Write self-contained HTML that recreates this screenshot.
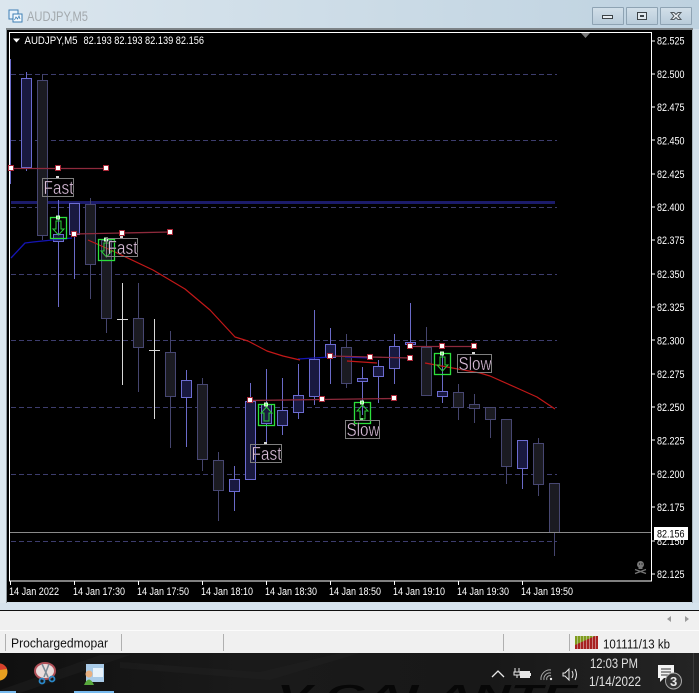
<!DOCTYPE html>
<html><head><meta charset="utf-8"><style>
html,body{margin:0;padding:0;background:#f0f0f0}
#r{position:relative;width:699px;height:693px;overflow:hidden;font-family:"Liberation Sans",sans-serif}
svg{filter:blur(.3px)}
</style></head><body><div id="r">
<svg width="699" height="693" viewBox="0 0 699 693" style="position:absolute;left:0;top:0" shape-rendering="crispEdges" font-family="Liberation Sans, sans-serif">
<defs>
<linearGradient id="tb2" x1="0" y1="0" x2="1" y2="0"><stop offset="0" stop-color="#dbe6ee"/><stop offset="1" stop-color="#bed2e0"/></linearGradient>
<linearGradient id="btn" x1="0" y1="0" x2="0" y2="1"><stop offset="0" stop-color="#d2dfe9"/><stop offset="1" stop-color="#b8cbd9"/></linearGradient>
<linearGradient id="task" x1="0" y1="0" x2="1" y2="0"><stop offset="0" stop-color="#101010"/><stop offset=".35" stop-color="#1a1a1a"/><stop offset=".7" stop-color="#181818"/><stop offset="1" stop-color="#242424"/></linearGradient>
</defs>
<!-- window frame -->
<rect width="699" height="29" fill="url(#tb2)"/>
<rect y="29" width="699" height="581" fill="#d3e0ea"/>
<rect x="0" y="29" width="6" height="581" fill="#dce7ef"/>
<rect x="6" y="28" width="687" height="2" fill="#7d8387"/>
<rect x="6" y="30" width="1" height="573" fill="#8c959b"/>
<rect x="692" y="30" width="1" height="573" fill="#aab6bf"/>
<!-- title -->
<g shape-rendering="auto">
<rect x="9" y="10" width="9" height="9" fill="#e8f2fa" stroke="#3d7fb5"/>
<rect x="13" y="14" width="9" height="8" fill="#f4f9fd" stroke="#3d7fb5"/>
<path d="M14.500 20l1.500-3 1.500 2 1.500-3 1 3" fill="none" stroke="#3d7fb5" stroke-width=".8"/>
<text x="27" y="21" font-size="13.500" fill="#a3a9ad" textLength="61" lengthAdjust="spacingAndGlyphs">AUDJPY,M5</text>
</g>
<!-- buttons -->
<g fill="url(#btn)" stroke="#8ea3b3"><rect x="592.500" y="7.500" width="31" height="17" rx="1"/><rect x="626.500" y="7.500" width="31" height="17" rx="1"/><rect x="660.500" y="7.500" width="31" height="17" rx="1"/></g>
<rect x="602.500" y="15.500" width="10" height="3" fill="#e8edf1" stroke="#3c4347"/>
<rect x="637.500" y="12.500" width="9" height="7" fill="#dfe7ed" stroke="#3c4347"/><rect x="640" y="15" width="4" height="2" fill="#3c4347"/>
<path shape-rendering="auto" d="M671 12.500l3 0 2 2 2-2 3 0-3 3.500 3 3.500-3 0-2-2-2 2-3 0 3-3.500z" fill="#eef2f5" stroke="#50585e"/>
<!-- chart -->
<rect x="7" y="30" width="685" height="572" fill="#000"/>
<rect x="9.500" y="32.500" width="642" height="548.500" fill="#000" stroke="#fff"/>
<path d="M652 41h3M652 74h3M652 107h3M652 140h3M652 174h3M652 207h3M652 240h3M652 274h3M652 307h3M652 340h3M652 374h3M652 407h3M652 440h3M652 474h3M652 507h3M652 541h3M652 574h3" stroke="#fff"/>
<path d="M10.500 581v4M74.500 581v4M138.500 581v4M202.500 581v4M266.500 581v4M330.500 581v4M394.500 581v4M458.500 581v4M522.500 581v4" stroke="#fff"/>
<!-- grid -->
<path d="M11 74.500H557M11 140.500H557M11 207.500H557M11 274.500H557M11 340.500H557M11 407.500H557M11 474.500H557M11 541.500H557" stroke="#3d3d6e" stroke-dasharray="5 3"/>
<!-- blue level -->
<rect x="11" y="201" width="544" height="3" fill="#1b1b6b"/>
<!-- wicks dark -->
<path d="M42.500 74V240M90.500 198V299M106.500 240V333M138.500 283V392M170.500 331V448M202.500 378V471M218.500 452V521M346.500 334V388M426.500 327V395M458.500 384V420M474.500 394V423M490.500 407V438M506.500 419V484M538.500 438V496M554.500 483V556" stroke="#45456e"/>
<!-- wicks bright -->
<path d="M10.500 59V184M26.500 72V171M58.500 200V307M74.500 203V279M186.500 370V447M234.500 466V511M250.500 383V479M266.500 369V445M282.500 378V435M298.500 364V419M314.500 310V405M330.500 328V384M362.500 367V415M378.500 360V403M394.500 334V384M410.500 303V348M442.500 353V403M522.500 440V489" stroke="#6a6ac8"/>
<!-- doji -->
<path d="M122.500 283V385M154.500 319V419M117 319.500H128M149 350.500H160" stroke="#d8d8d8"/>
<!-- bodies dark -->
<g fill="#1b1b22" stroke="#474772">
<rect x="37.500" y="80.500" width="10" height="155"/>
<rect x="85.500" y="204.500" width="10" height="60"/>
<rect x="101.500" y="240.500" width="10" height="78"/>
<rect x="133.500" y="318.500" width="10" height="29"/>
<rect x="165.500" y="352.500" width="10" height="44"/>
<rect x="197.500" y="384.500" width="10" height="75"/>
<rect x="213.500" y="460.500" width="10" height="30"/>
<rect x="341.500" y="347.500" width="10" height="36"/>
<rect x="421.500" y="347.500" width="10" height="48"/>
<rect x="453.500" y="392.500" width="10" height="15"/>
<rect x="469.500" y="404.500" width="10" height="4"/>
<rect x="485.500" y="407.500" width="10" height="12"/>
<rect x="501.500" y="419.500" width="10" height="47"/>
<rect x="533.500" y="443.500" width="10" height="41"/>
<rect x="549.500" y="483.500" width="10" height="49"/>
</g>
<!-- bodies bright -->
<g fill="#191940" stroke="#6c6cd2">
<rect x="21.500" y="78.500" width="10" height="89"/>
<rect x="53.500" y="234.500" width="10" height="7"/>
<rect x="69.500" y="203.500" width="10" height="31"/>
<rect x="181.500" y="380.500" width="10" height="17"/>
<rect x="229.500" y="479.500" width="10" height="12"/>
<rect x="245.500" y="401.500" width="10" height="78"/>
<rect x="261.500" y="404.500" width="10" height="19"/>
<rect x="277.500" y="410.500" width="10" height="15"/>
<rect x="293.500" y="395.500" width="10" height="17"/>
<rect x="309.500" y="359.500" width="10" height="37"/>
<rect x="325.500" y="344.500" width="10" height="13"/>
<rect x="357.500" y="378.500" width="10" height="3"/>
<rect x="373.500" y="366.500" width="10" height="10"/>
<rect x="389.500" y="346.500" width="10" height="22"/>
<rect x="405.500" y="342.500" width="10" height="2"/>
<rect x="437.500" y="391.500" width="10" height="5"/>
<rect x="517.500" y="440.500" width="10" height="28"/>
</g>
<!-- current price -->
<rect x="10" y="532" width="641" height="1" fill="#8a8a8a"/>
<g shape-rendering="auto" fill="none" stroke-linejoin="round">
<path d="M11 258L25 243 33 242 72 238" stroke="#1414b4" stroke-width="1.300"/>
<path d="M298 359L330 357M345 357L370 358" stroke="#1414b4" stroke-width="1.200"/>
<path d="M88 240L115 252 153 270 185 289 210 310 235 337 248 341 267 351 283 356 300 360M347 361L377 363M425 363L447 367 480 373 490 376 517 388 537 397 555 409" stroke="#c21818" stroke-width="1.200"/>
<path d="M11 168.500H106M74 234L122 233 170 232M250 400.500L322 399.500 394 398.500M330 356L370 357 410 358M410 346.500H474" stroke="#8e2a3c" stroke-width="1.300"/>
</g>
<!-- handles -->
<g fill="#fff" stroke="#a82838">
<rect x="8.500" y="165.500" width="5" height="5"/><rect x="55.500" y="165.500" width="5" height="5"/><rect x="103.500" y="165.500" width="5" height="5"/>
<rect x="71.500" y="231.500" width="5" height="5"/><rect x="119.500" y="230.500" width="5" height="5"/><rect x="167.500" y="229.500" width="5" height="5"/>
<rect x="247.500" y="397.500" width="5" height="5"/><rect x="319.500" y="396.500" width="5" height="5"/><rect x="391.500" y="395.500" width="5" height="5"/>
<rect x="327.500" y="353.500" width="5" height="5"/><rect x="367.500" y="354.500" width="5" height="5"/><rect x="407.500" y="355.500" width="5" height="5"/>
<rect x="407.500" y="343.500" width="5" height="5"/><rect x="439.500" y="343.500" width="5" height="5"/><rect x="471.500" y="343.500" width="5" height="5"/>
</g>
<!-- small label anchors -->
<g fill="#d8d8d8"><rect x="56" y="176" width="3" height="3"/><rect x="120" y="236" width="3" height="3"/><rect x="264" y="442" width="3" height="3"/><rect x="360" y="418" width="3" height="3"/><rect x="472" y="352" width="3" height="3"/></g>
<!-- green boxes -->
<g fill="none" stroke="#2ce03c" stroke-width="1.300" shape-rendering="auto">
<rect x="50.500" y="217.500" width="16" height="21"/>
<rect x="98.500" y="239.500" width="16" height="21"/>
<rect x="258.500" y="404.500" width="16" height="21"/>
<rect x="354.500" y="402.500" width="16" height="21"/>
<rect x="434.500" y="353.500" width="16" height="21"/>
</g>
<g fill="none" stroke="#2ccf3a" shape-rendering="auto" stroke-width="1">
<path d="M56 221V229H53L58.500 235 64 229H61V221Z"/>
<path d="M104 243V251H101L106.500 257 112 251H109V243Z"/>
<path d="M264 421V413H261L266.500 407 272 413H269V421Z"/>
<path d="M360 419V411H357L362.500 405 368 411H365V419Z"/>
<path d="M440 357V365H437L442.500 371 448 365H445V357Z"/>
</g>
<g fill="#6dff6d" stroke="#d8ffd8"><rect x="56.500" y="216" width="3" height="3"/><rect x="104.500" y="238" width="3" height="3"/><rect x="264.500" y="403" width="3" height="3"/><rect x="360.500" y="401" width="3" height="3"/><rect x="440.500" y="352" width="3" height="3"/></g>
<!-- labels -->
<g fill="none" stroke="#7f7f7f"><rect x="42.500" y="178.500" width="31" height="18"/><rect x="106.500" y="238.500" width="31" height="18"/><rect x="250.500" y="444.500" width="31" height="18"/><rect x="345.500" y="420.500" width="34" height="18"/><rect x="457.500" y="354.500" width="34" height="18"/></g>
<g shape-rendering="auto" font-size="18" fill="#dcc0dc" stroke="#000" stroke-width=".35">
<text x="43.500" y="194" textLength="30" lengthAdjust="spacingAndGlyphs">Fast</text>
<text x="107.500" y="254" textLength="30" lengthAdjust="spacingAndGlyphs">Fast</text>
<text x="251.500" y="460" textLength="30" lengthAdjust="spacingAndGlyphs">Fast</text>
<text x="346.500" y="436" textLength="33" lengthAdjust="spacingAndGlyphs">Slow</text>
<text x="458.500" y="370" textLength="33" lengthAdjust="spacingAndGlyphs">Slow</text>
</g>
<!-- header -->
<path shape-rendering="auto" d="M13 38.500H20L16.500 42.500Z" fill="#fff"/>
<path shape-rendering="auto" d="M581 33H590L585.500 38Z" fill="#7a7a7a"/>
<g shape-rendering="auto" fill="#fff" font-size="11">
<text x="24.500" y="44" textLength="53" lengthAdjust="spacingAndGlyphs">AUDJPY,M5</text>
<text x="83.500" y="44" textLength="120.500" lengthAdjust="spacingAndGlyphs">82.193 82.193 82.139 82.156</text>
</g>
<!-- price axis -->
<g shape-rendering="auto" fill="#fff" font-size="11">
<text x="657" y="44.500" textLength="27.500" lengthAdjust="spacingAndGlyphs">82.525</text>
<text x="657" y="78" textLength="27.500" lengthAdjust="spacingAndGlyphs">82.500</text>
<text x="657" y="111" textLength="27.500" lengthAdjust="spacingAndGlyphs">82.475</text>
<text x="657" y="144.500" textLength="27.500" lengthAdjust="spacingAndGlyphs">82.450</text>
<text x="657" y="178" textLength="27.500" lengthAdjust="spacingAndGlyphs">82.425</text>
<text x="657" y="211" textLength="27.500" lengthAdjust="spacingAndGlyphs">82.400</text>
<text x="657" y="244" textLength="27.500" lengthAdjust="spacingAndGlyphs">82.375</text>
<text x="657" y="278" textLength="27.500" lengthAdjust="spacingAndGlyphs">82.350</text>
<text x="657" y="311" textLength="27.500" lengthAdjust="spacingAndGlyphs">82.325</text>
<text x="657" y="344.500" textLength="27.500" lengthAdjust="spacingAndGlyphs">82.300</text>
<text x="657" y="378" textLength="27.500" lengthAdjust="spacingAndGlyphs">82.275</text>
<text x="657" y="411" textLength="27.500" lengthAdjust="spacingAndGlyphs">82.250</text>
<text x="657" y="444.500" textLength="27.500" lengthAdjust="spacingAndGlyphs">82.225</text>
<text x="657" y="478" textLength="27.500" lengthAdjust="spacingAndGlyphs">82.200</text>
<text x="657" y="511" textLength="27.500" lengthAdjust="spacingAndGlyphs">82.175</text>
<text x="657" y="545" textLength="27.500" lengthAdjust="spacingAndGlyphs">82.150</text>
<text x="657" y="578" textLength="27.500" lengthAdjust="spacingAndGlyphs">82.125</text>
</g>
<rect x="654" y="527" width="34" height="13" fill="#fff"/>
<text shape-rendering="auto" x="657" y="537.500" font-size="11" fill="#000" textLength="27.500" lengthAdjust="spacingAndGlyphs">82.156</text>
<!-- time axis -->
<g shape-rendering="auto" fill="#fff" font-size="11">
<text x="9" y="595" textLength="50" lengthAdjust="spacingAndGlyphs">14 Jan 2022</text>
<text x="73" y="595" textLength="52" lengthAdjust="spacingAndGlyphs">14 Jan 17:30</text>
<text x="137" y="595" textLength="52" lengthAdjust="spacingAndGlyphs">14 Jan 17:50</text>
<text x="201" y="595" textLength="52" lengthAdjust="spacingAndGlyphs">14 Jan 18:10</text>
<text x="265" y="595" textLength="52" lengthAdjust="spacingAndGlyphs">14 Jan 18:30</text>
<text x="329" y="595" textLength="52" lengthAdjust="spacingAndGlyphs">14 Jan 18:50</text>
<text x="393" y="595" textLength="52" lengthAdjust="spacingAndGlyphs">14 Jan 19:10</text>
<text x="457" y="595" textLength="52" lengthAdjust="spacingAndGlyphs">14 Jan 19:30</text>
<text x="521" y="595" textLength="52" lengthAdjust="spacingAndGlyphs">14 Jan 19:50</text>
</g>
<!-- skull -->
<g shape-rendering="auto" fill="#767676"><circle cx="640.500" cy="564.500" r="3.500"/><rect x="638.500" y="566" width="4" height="3"/><path d="M635 569.500L646 573.500M646 569.500L635 573.500" stroke="#767676" stroke-width="1.300" fill="none"/><rect x="639" y="563.500" width="1" height="1" fill="#000"/><rect x="641.500" y="563.500" width="1" height="1" fill="#000"/></g>
<!-- bottom bars -->
<rect x="0" y="603" width="699" height="7" fill="#d6e3ed"/>
<rect x="0" y="610" width="699" height="1" fill="#101010"/>
<rect x="0" y="611" width="699" height="20" fill="#f0f0f0"/>
<path shape-rendering="auto" d="M671 616V622L667 619ZM685 616V622L689 619Z" fill="#9a9a9a"/>
<rect x="0" y="630" width="699" height="1" fill="#fbfbfb"/>
<rect x="0" y="631" width="699" height="22" fill="#f0f0f0"/>
<g fill="#b0b0b0"><rect x="5" y="634" width="1" height="17"/><rect x="121" y="634" width="1" height="17"/><rect x="223" y="634" width="1" height="17"/><rect x="503" y="634" width="1" height="17"/><rect x="569" y="634" width="1" height="17"/></g>
<text shape-rendering="auto" x="11" y="647.500" font-size="13" fill="#111" textLength="97" lengthAdjust="spacingAndGlyphs">Prochargedmopar</text>
<!-- traffic bars -->
<rect x="575" y="636" width="23" height="13" fill="#a82020"/>
<path shape-rendering="auto" d="M575 636H595L575 645Z" fill="#7f9c1e"/>
<path d="M577.500 636V649M580.500 636V649M583.500 636V649M586.500 636V649M589.500 636V649M592.500 636V649M595.500 636V649" stroke="#f0f0f0" stroke-opacity=".45"/>
<text shape-rendering="auto" x="603" y="648.500" font-size="13" fill="#111" textLength="67" lengthAdjust="spacingAndGlyphs">101111/13 kb</text>
<!-- taskbar -->
<rect x="0" y="653" width="699" height="40" fill="url(#task)"/>
<path shape-rendering="auto" d="M120 662L260 672 340 653H360L270 680 120 668ZM0 690L100 655H130L20 693Z" fill="#262626" opacity=".35"/>
<text shape-rendering="auto" x="277" y="704" font-size="28" font-weight="bold" font-style="italic" fill="#070707" textLength="300" lengthAdjust="spacingAndGlyphs">V GALANTE</text>
<rect x="693" y="653" width="1" height="40" fill="#3a3a3a"/>
<!-- task icons -->
<g shape-rendering="auto">
<circle cx="-1" cy="672" r="8.500" fill="#e8a020"/><path d="M-1 663.500A8.500 8.500 0 0 1 7 669L0 670Z" fill="#d8402c"/>
<ellipse cx="45" cy="671" rx="10" ry="8" fill="#e9dcdc" stroke="#b05058" stroke-width="2"/><path d="M42 664L48 677M49 664L44 677" stroke="#7a8a96" stroke-width="1.500"/><circle cx="42" cy="681" r="2.500" fill="none" stroke="#2a88c8" stroke-width="1.800"/><circle cx="52" cy="679" r="2.500" fill="none" stroke="#2a88c8" stroke-width="1.800"/>
<rect x="86" y="664" width="18" height="18" fill="#a9cbe8"/><rect x="93" y="668" width="10" height="9" fill="#e8f2fa"/>
<circle cx="89" cy="674" r="3.500" fill="#e8b080"/><path d="M84 685Q89 674 94 685Z" fill="#58a83c"/>
</g>
<rect x="0" y="691" width="16" height="2" fill="#76b9ed"/>
<rect x="74" y="691" width="40" height="2" fill="#76b9ed"/>
<!-- tray -->
<g shape-rendering="auto" fill="none" stroke="#e8e8e8">
<path d="M492 677L498 671 504 677" stroke-width="1.300"/>
<path d="M515 668V672M519 668V672M514 672H520V675H514ZM517 675V678" stroke-width="1"/>
<rect x="520" y="671" width="10" height="7" fill="#e8e8e8" stroke="none"/><rect x="530" y="673" width="1" height="3" fill="#e8e8e8" stroke="none"/>
<path d="M541 680A9 9 0 0 1 551 670M544 680A6 6 0 0 1 551 673M547 680A3 3 0 0 1 551 676" stroke-width="1" stroke="#a8a8a8"/><circle cx="551" cy="679" r="1.200" fill="#e8e8e8" stroke="none"/>
<path d="M563 673H565L569 669V680L565 676H563Z" stroke-width="1"/><path d="M572 671Q574 674.500 572 678M575 669Q578 674.500 575 680" stroke-width="1"/>
</g>
<g shape-rendering="auto" fill="#e0e0e0" font-size="13.500">
<text x="590" y="668" textLength="48" lengthAdjust="spacingAndGlyphs">12:03 PM</text>
<text x="589" y="686" textLength="52" lengthAdjust="spacingAndGlyphs">1/14/2022</text>
</g>
<g shape-rendering="auto">
<path d="M658 665H674V678H664L660 682V678H658Z" fill="#f4f4f4"/>
<path d="M661 669H671M661 672H671M661 675H668" stroke="#333" stroke-width="1"/>
<circle cx="673.500" cy="681" r="8" fill="#333" stroke="#aaa"/>
<text x="670" y="686" font-size="13" font-weight="bold" fill="#e8e8e8">3</text>
</g>
</svg>
</div></body></html>
